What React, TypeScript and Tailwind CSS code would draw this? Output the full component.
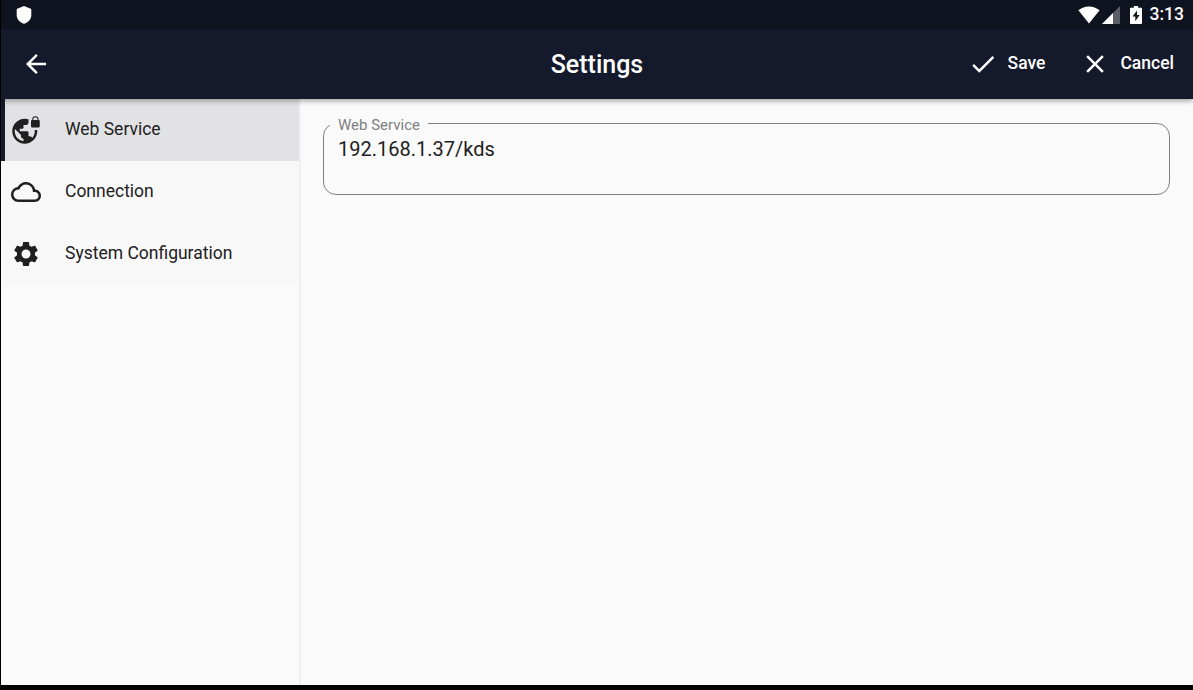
import type { ComponentType } from "react";
import {
	MdArrowBack,
	MdCheck,
	MdClose,
	MdCloudQueue,
	MdSettings,
	MdVpnLock,
} from "react-icons/md";

type MenuItem = {
	label: string;
	icon: ComponentType<{ size?: number; className?: string }>;
	active?: boolean;
};

const menuItems: MenuItem[] = [
	{ label: "Web Service", icon: MdVpnLock, active: true },
	{ label: "Connection", icon: MdCloudQueue },
	{ label: "System Configuration", icon: MdSettings },
];

function StatusBar() {
	return (
		<div className="flex h-[29px] shrink-0 items-center bg-[#0f131f] pr-[9px] pl-[15px] text-white">
			<svg width="16" height="18" viewBox="0 0 16 18" fill="currentColor">
				<path d="M8 0 15.3 3v6.2c0 4-3 7-7.3 8.6C3.700 16.200.7 13.200.7 9.200V3Z" />
			</svg>
			<div className="ml-auto flex items-center">
				{/* Wifi */}
				<svg width="22" height="18" viewBox="0 0 22 18" fill="currentColor">
					<path d="M11 17.500.4 4.300C3.500 1.800 7 .5 11 .5s7.500 1.300 10.600 3.800Z" />
				</svg>
				{/* Mobile signal */}
				<svg width="18" height="18" viewBox="0 0 18 18" fill="currentColor" className="ml-[2px]">
					<path d="M18 0v18H0Z" opacity=".32" />
					<path d="M11 7v11H0Z" />
				</svg>
				{/* Battery charging */}
				<svg width="12" height="18" viewBox="0 0 12 18" className="ml-[10px]">
					<path
						d="M3.800 0h4.400v1.800H11c.6 0 1 .4 1 1V17c0 .6-.4 1-1 1H1c-.6 0-1-.4-1-1V2.800c0-.6.4-1 1-1h2.800Z"
						fill="currentColor"
					/>
					<path d="M7 4.500 2.500 10.500H5.300V15.200L9.600 8.900H7Z" fill="#0f131f" />
				</svg>
				<span className="ml-[8px] text-[17.5px] leading-none font-medium">3:13</span>
			</div>
		</div>
	);
}

function AppBar() {
	return (
		<header className="z-10 grid h-[70px] shrink-0 grid-cols-[1fr_auto_1fr] items-center bg-[#14192b] text-white shadow-[0_2px_5px_rgba(0,0,0,0.35)]">
			<button className="ml-5 justify-self-start">
				<MdArrowBack size={30} />
			</button>
			<h1 className="text-[25px] leading-none font-medium">Settings</h1>
			<div className="mr-[19px] flex items-center gap-[35px] justify-self-end text-[17.5px] leading-none font-medium">
				<button className="flex items-center gap-[10px]">
					<MdCheck size={30} />
					Save
				</button>
				<button className="flex items-center gap-[10px]">
					<MdClose size={30} />
					Cancel
				</button>
			</div>
		</header>
	);
}

function Sidebar() {
	return (
		<aside className="w-[300px] shrink-0 border-r-2 border-[#f0f0f0]">
			<nav>
				{menuItems.map(({ label, icon: Icon, active }) => (
					<button
						key={label}
						className={
							active
								? "flex h-[62px] w-full items-center gap-6 border-l-4 border-[#14192b] bg-[#e2e2e4] pl-[6px]"
								: "flex h-[62px] w-full items-center gap-6 bg-[#f8f8f8] pl-[10px]"
						}
					>
						<Icon size={30} className="text-[#1f1f1f]" />
						<span className="text-[17.5px] leading-none">{label}</span>
					</button>
				))}
			</nav>
		</aside>
	);
}

export default function App() {
	return (
		<div className="flex h-[690px] w-[1193px] flex-col overflow-hidden border-b-5 border-l border-black bg-[#fafafa] font-['Roboto',sans-serif] text-[#212121]">
			<StatusBar />
			<AppBar />
			<div className="flex flex-1">
				<Sidebar />
				<main className="flex-1 pt-[15px] pr-[23px] pl-[22px]">
					<fieldset className="h-[81px] rounded-[13px] border border-[#808080] pl-[6px]">
						<legend className="h-[18px] w-[98px] pt-[2px] pl-[8px] text-[15px] leading-[18px] text-[#808080]">
							Web Service
						</legend>
						<input
							defaultValue="192.168.1.37/kds"
							className="mt-[5px] block w-full bg-transparent pl-[8px] text-[20px] leading-6 outline-none"
						/>
					</fieldset>
				</main>
			</div>
		</div>
	);
}
